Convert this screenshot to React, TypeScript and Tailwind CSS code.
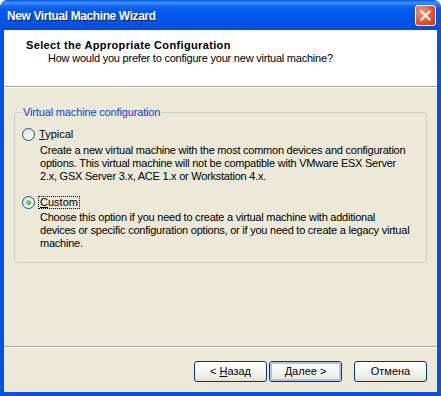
import React from "react";

const font = { fontFamily: '"Liberation Sans", Arial, sans-serif' };

function Radio({ checked }: { checked?: boolean }) {
  return (
    <span className="relative flex h-[13px] w-[13px] shrink-0 items-center justify-center rounded-full border border-[#1C5180] bg-[linear-gradient(135deg,#DCDCD3_0%,#F4F4F0_55%,#FFFFFF_100%)]">
      {checked && (
        <span className="h-[5px] w-[5px] rounded-full bg-[radial-gradient(circle_at_35%_35%,#7FE37B,#21A121)]" />
      )}
    </span>
  );
}

function XpButton({
  children,
  isDefault,
}: {
  children: React.ReactNode;
  isDefault?: boolean;
}) {
  return (
    <button
      className="flex h-[21px] w-[73px] items-center justify-center rounded-[3px] border border-[#003C74] bg-[linear-gradient(to_bottom,#FFFFFF_0%,#F4F4F0_60%,#E3E0D4_100%)] p-0 text-[11px] leading-[13px] text-black"
      style={font}
    >
      <span
        className={
          isDefault
            ? "flex h-full w-full items-center justify-center rounded-[2px] border-2 border-[#A9C5F2]"
            : "flex h-full w-full items-center justify-center"
        }
      >
        {children}
      </span>
    </button>
  );
}

export default function App() {
  return (
    <div
      className="flex h-[396px] w-[441px] flex-col overflow-hidden rounded-t-[8px] bg-[#0553E6]"
      style={font}
    >
      {/* Title bar */}
      <div className="flex h-[30px] shrink-0 items-center justify-between bg-[linear-gradient(to_bottom,#0A5AE6_0%,#3E95FE_10%,#1C6BF2_18%,#0058EE_35%,#0055E5_75%,#0449D8_100%)] pl-[7px] pr-[5px]">
        <span className="pt-[1px] text-[12px] font-bold leading-[30px] tracking-[-0.4px] text-white [text-shadow:1px_1px_0_#0A1E6A]">
          New Virtual Machine Wizard
        </span>
        <span className="flex h-[21px] w-[21px] items-center justify-center rounded-[3px] border border-white bg-[radial-gradient(circle_at_30%_30%,#F39A7C,#E0512B_60%,#C23A14)]">
          <svg width="11" height="11" viewBox="0 0 11 11">
            <path
              d="M1.5 1.5 L9.5 9.5 M9.5 1.5 L1.5 9.5"
              stroke="white"
              strokeWidth="2.2"
              strokeLinecap="square"
            />
          </svg>
        </span>
      </div>

      {/* Client area */}
      <div className="mx-[4px] mb-[4px] flex flex-1 flex-col bg-[#ECE9D8]">
        {/* Header */}
        <div className="h-[56px] shrink-0 bg-white pl-[22px] pt-[9px] text-[11px] leading-[13px] text-black">
          <div className="font-bold tracking-[0.35px]">
            Select the Appropriate Configuration
          </div>
          <div className="pl-[22px] tracking-[-0.22px]">
            How would you prefer to configure your new virtual machine?
          </div>
        </div>
        <div className="h-px bg-[#ACA899]" />
        <div className="h-px bg-white" />

        {/* Group box */}
        <fieldset className="mx-[10px] mt-[18px] rounded-[4px] border border-[#D0D0BF] pb-[12px] pl-[7px] pr-[6px] pt-[9px] text-[11px] leading-[13px] text-black">
          <legend className="px-[1px] tracking-[-0.15px] text-[#0046D5]">
            Virtual machine configuration
          </legend>

          <div className="flex h-[13px] items-center gap-[4px]">
            <Radio />
            <span>
              <span className="underline">T</span>ypical
            </span>
          </div>
          <div className="mt-[3px] whitespace-nowrap pl-[18px] tracking-[-0.24px]">
            Create a new virtual machine with the most common devices and
            configuration
            <br />
            options. This virtual machine will not be compatible with VMware
            ESX Server
            <br />
            2.x, GSX Server 3.x, ACE 1.x or Workstation 4.x.
          </div>

          <div className="mt-[13px] flex h-[13px] items-center gap-[3px]">
            <Radio checked />
            <span className="border border-dotted border-black px-[1px] leading-[11px]">
              <span className="underline">C</span>ustom
            </span>
          </div>
          <div className="mt-[2px] whitespace-nowrap pl-[18px] tracking-[-0.24px]">
            Choose this option if you need to create a virtual machine with
            additional
            <br />
            devices or specific configuration options, or if you need to create
            a legacy virtual
            <br />
            machine.
          </div>
        </fieldset>

        <div className="flex-1" />

        {/* Footer */}
        <div className="h-px bg-[#ACA899]" />
        <div className="h-px bg-white" />
        <div className="flex h-[44px] shrink-0 items-start justify-end pr-[10px] pt-[13px]">
          <XpButton>
            &lt; <span className="ml-[3px] underline">Н</span>азад
          </XpButton>
          <div className="w-[2px]" />
          <XpButton isDefault>
            <span className="underline">Д</span>алее &gt;
          </XpButton>
          <div className="w-[12px]" />
          <XpButton>Отмена</XpButton>
        </div>
      </div>
    </div>
  );
}
